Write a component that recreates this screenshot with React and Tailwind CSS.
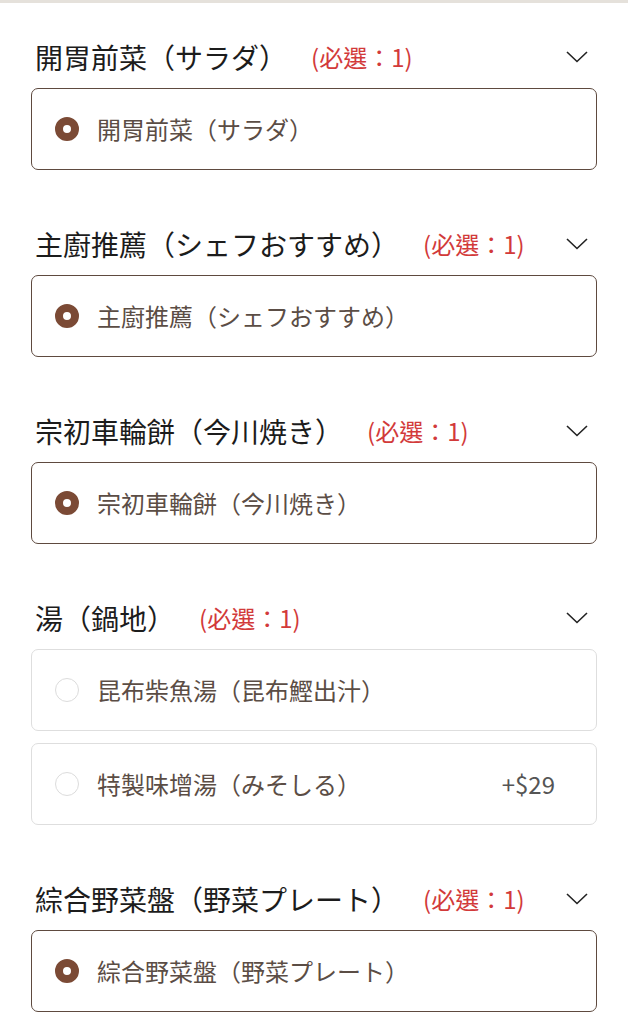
const sections = [
  {
    title: "開胃前菜（サラダ）",
    options: [{ name: "開胃前菜（サラダ）", selected: true }],
  },
  {
    title: "主廚推薦（シェフおすすめ）",
    options: [{ name: "主廚推薦（シェフおすすめ）", selected: true }],
  },
  {
    title: "宗初車輪餅（今川焼き）",
    options: [{ name: "宗初車輪餅（今川焼き）", selected: true }],
  },
  {
    title: "湯（鍋地）",
    options: [
      { name: "昆布柴魚湯（昆布鰹出汁）", selected: false },
      { name: "特製味增湯（みそしる）", selected: false, price: "+$29" },
    ],
  },
  {
    title: "綜合野菜盤（野菜プレート）",
    options: [{ name: "綜合野菜盤（野菜プレート）", selected: true }],
  },
];

function Chevron() {
  return (
    <svg width="24" height="14" viewBox="0 0 24 14" fill="none" stroke="#222" strokeWidth="1.6">
      <path d="M2 2 L12 11.5 L22 2" />
    </svg>
  );
}

function Option({ option }) {
  return (
    <div
      className={
        "flex items-center h-[82px] rounded-[7px] bg-white pl-[23px] pr-[41px] " +
        (option.selected ? "border-[1.5px] border-[#5e4a3f]" : "border border-[#dedede]")
      }
    >
      {option.selected ? (
        <span className="w-6 h-6 rounded-full border-[8px] border-[#7b4a35] bg-white shrink-0" />
      ) : (
        <span className="w-6 h-6 rounded-full border-[1.5px] border-[#dcdcdc] bg-white shrink-0" />
      )}
      <span className="ml-[18px] text-[24px] leading-none text-[#5b4d45]">{option.name}</span>
      {option.price && (
        <span className="ml-auto text-[24px] leading-none text-[#555]">{option.price}</span>
      )}
    </div>
  );
}

export default function App() {
  return (
    <div
      className="min-h-screen bg-white"
      style={{ fontFamily: '"Noto Sans CJK TC", "Noto Sans CJK JP", "Noto Sans", sans-serif' }}
    >
      <div className="h-[3px] bg-[#e5e1db]" />
      <div className="px-[31px] pt-[36px] flex flex-col gap-[56px]">
        {sections.map((s) => (
          <div key={s.title}>
            <div className="flex items-center h-[36px] pl-[4px] pr-[8px] mb-[13px]">
              <span className="text-[28px] leading-none text-[#1c1c1c]">{s.title}</span>
              <span className="ml-[24px] text-[24px] leading-none text-[#d23a3a]">(必選：1)</span>
              <span className="ml-auto">
                <Chevron />
              </span>
            </div>
            <div className="flex flex-col gap-[12px]">
              {s.options.map((o) => (
                <Option key={o.name} option={o} />
              ))}
            </div>
          </div>
        ))}
      </div>
    </div>
  );
}
